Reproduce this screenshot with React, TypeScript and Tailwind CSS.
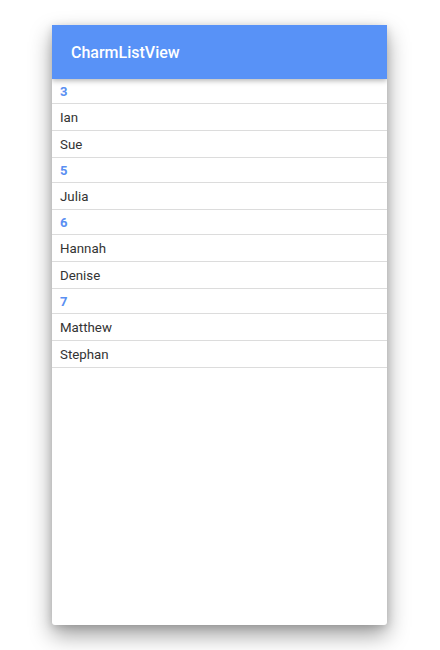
import React from "react";

type Row = { kind: "h" | "i"; text: string };

const rows: Row[] = [
  { kind: "h", text: "3" },
  { kind: "i", text: "Ian" },
  { kind: "i", text: "Sue" },
  { kind: "h", text: "5" },
  { kind: "i", text: "Julia" },
  { kind: "h", text: "6" },
  { kind: "i", text: "Hannah" },
  { kind: "i", text: "Denise" },
  { kind: "h", text: "7" },
  { kind: "i", text: "Matthew" },
  { kind: "i", text: "Stephan" },
];

export default function App() {
  return (
    <div
      className="w-[440px] h-[650px] bg-white pt-[25px] pl-[52px]"
      style={{ fontFamily: "Roboto, 'Liberation Sans', sans-serif" }}
    >
      <div className="w-[335px] h-[600px] bg-white flex flex-col rounded-b-[3px] shadow-[0_10px_22px_rgba(0,0,0,0.38),0_2px_8px_rgba(0,0,0,0.15)] overflow-hidden">
        <div className="h-[54px] bg-[#5892f7] flex items-center pl-[19px] pt-[2px] text-white text-[16px] font-medium relative z-10 shadow-[0_2px_5px_rgba(0,0,0,0.28)] shrink-0">
          CharmListView
        </div>
        <div className="flex flex-col">
          {rows.map((r, i) =>
            r.kind === "h" ? (
              <div
                key={i}
                className="h-[25px] border-b border-[#dcdcdc] flex items-center pl-[8px] pt-[2px] text-[13px] font-bold text-[#5a8ff2]"
              >
                {r.text}
              </div>
            ) : (
              <div
                key={i}
                className="h-[27px] border-b border-[#dcdcdc] flex items-center pl-[8px] pt-[2px] text-[13.3px] text-[#333333]"
              >
                {r.text}
              </div>
            )
          )}
        </div>
      </div>
    </div>
  );
}
